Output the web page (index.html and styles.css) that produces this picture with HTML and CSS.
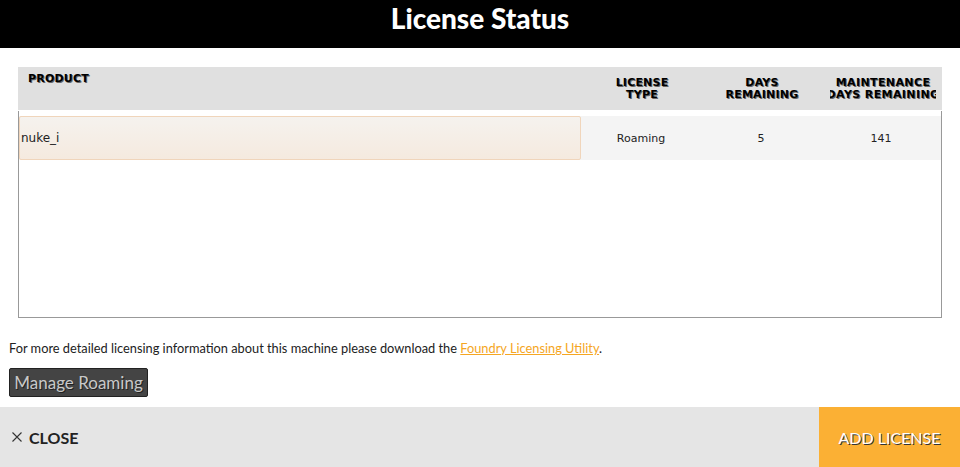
FILE: index.html
```html
<!DOCTYPE html>
<html lang="en">

<head>
  <meta charset="UTF-8">
  <meta name="viewport" content="width=device-width, initial-scale=1.0">
  <title>License Status</title>
  <link rel="stylesheet" href="styles.css">
</head>

<body>
  <div class="title-bar">
    <h1>License Status</h1>
  </div>

  <div class="content">
    <div class="license-table">
      <div class="table-head">
        <div class="th th-product">PRODUCT</div>
        <div class="th">LICENSE<br>TYPE</div>
        <div class="th">DAYS<br>REMAINING</div>
        <div class="th th-maint"><span class="clip">MAINTENANCE<br>DAYS REMAINING</span></div>
      </div>
      <div class="table-body">
        <div class="row">
          <div class="td td-product">nuke_i</div>
          <div class="td">Roaming</div>
          <div class="td">5</div>
          <div class="td">141</div>
        </div>
      </div>
    </div>

    <p class="info">For more detailed licensing information about this machine please download the <a href="#">Foundry Licensing Utility</a>.</p>

    <button class="btn-roaming">Manage Roaming</button>
  </div>

  <div class="footer">
    <button class="btn-close">
      <svg class="x" width="10" height="10" viewBox="0 0 10 10">
        <path d="M0.5 0.5 L9.5 9.5 M9.5 0.5 L0.5 9.5" stroke="#333" stroke-width="1.1" fill="none" />
      </svg>CLOSE
    </button>
    <button class="btn-add">ADD LICENSE</button>
  </div>
</body>

</html>
```

FILE: styles.css
```css
html,
body {
  margin: 0;
  height: 100%;
}

body {
  display: flex;
  flex-direction: column;
  background: #fff;
  font-family: Lato, "Open Sans", sans-serif;
  overflow: hidden;
}

/* 標題列 */
.title-bar {
  background: #000;
  height: 48px;
  text-align: center;
}

.title-bar h1 {
  margin: 0;
  padding-top: 3px;
  color: #fff;
  font-size: 28px;
  font-weight: 900;
  line-height: 30px;
}

.content {
  flex: 1;
  padding: 19px 9px 0;
}

/* 表格 */
.license-table {
  margin: 0 9px;
  font-family: "DejaVu Sans", Verdana, sans-serif;
}

.table-head {
  display: grid;
  grid-template-columns: 1fr 120px 120px 120px;
  height: 43px;
  background: #e0e0e0;
}

.th {
  align-self: center;
  text-align: center;
  font-size: 11px;
  font-weight: bold;
  line-height: 12px;
  letter-spacing: 0.2px;
  color: #000;
  text-shadow: 1px 1px 0 #666;
  overflow: hidden;
  padding: 0 7px;
}

.th-product {
  align-self: start;
  text-align: left;
  padding: 6px 10px 0;
}

/* 欄寬不夠，文字左右被裁切 */
.th-maint {
  padding: 0;
  margin: 0 6px 0 8px;
}

.clip {
  display: block;
  margin: 0 -30px;
  white-space: nowrap;
  letter-spacing: 0.4px;
}

.table-body {
  box-sizing: border-box;
  height: 207px;
  border: 1px solid #999;
  border-top: 0;
  padding-top: 5px;
  margin-top: 1px;
}

.row {
  display: grid;
  grid-template-columns: 1fr 120px 120px 120px;
  height: 44px;
  background: #f4f4f4;
}

.td {
  display: flex;
  align-items: center;
  justify-content: center;
  font-size: 11px;
  color: #222;
}

.td-product {
  justify-content: flex-start;
  padding-left: 1px;
  border: 1px solid #f0d5bb;
  border-radius: 2px;
  background: linear-gradient(#f5f2ee, #f5eadf);
  font-size: 12px;
}

/* 說明文字 */
.info {
  margin: 22px 0 12px;
  font-size: 12.8px;
  color: #222;
}

.info a {
  color: #f5a623;
}

.btn-roaming {
  width: 139px;
  height: 29px;
  padding: 0;
  background: #444;
  border: 1px solid #222;
  border-radius: 2px;
  color: #c8c8c8;
  font-family: Lato, sans-serif;
  font-size: 17px;
  text-shadow: 1px 1px 0 #222;
}

/* 底部 */
.footer {
  display: flex;
  justify-content: space-between;
  height: 60px;
  background: #e5e5e5;
}

.footer button {
  border: 0;
  font-family: Lato, sans-serif;
  font-size: 16px;
}

.btn-close {
  display: flex;
  align-items: center;
  background: none;
  padding: 0 0 0 12px;
  color: #222;
  font-weight: bold;
}

.btn-close .x {
  margin-right: 7px;
}

.btn-add {
  width: 141px;
  background: #fbb034;
  color: #fff;
  text-shadow: 1px 1px 0 #333;
}
```
